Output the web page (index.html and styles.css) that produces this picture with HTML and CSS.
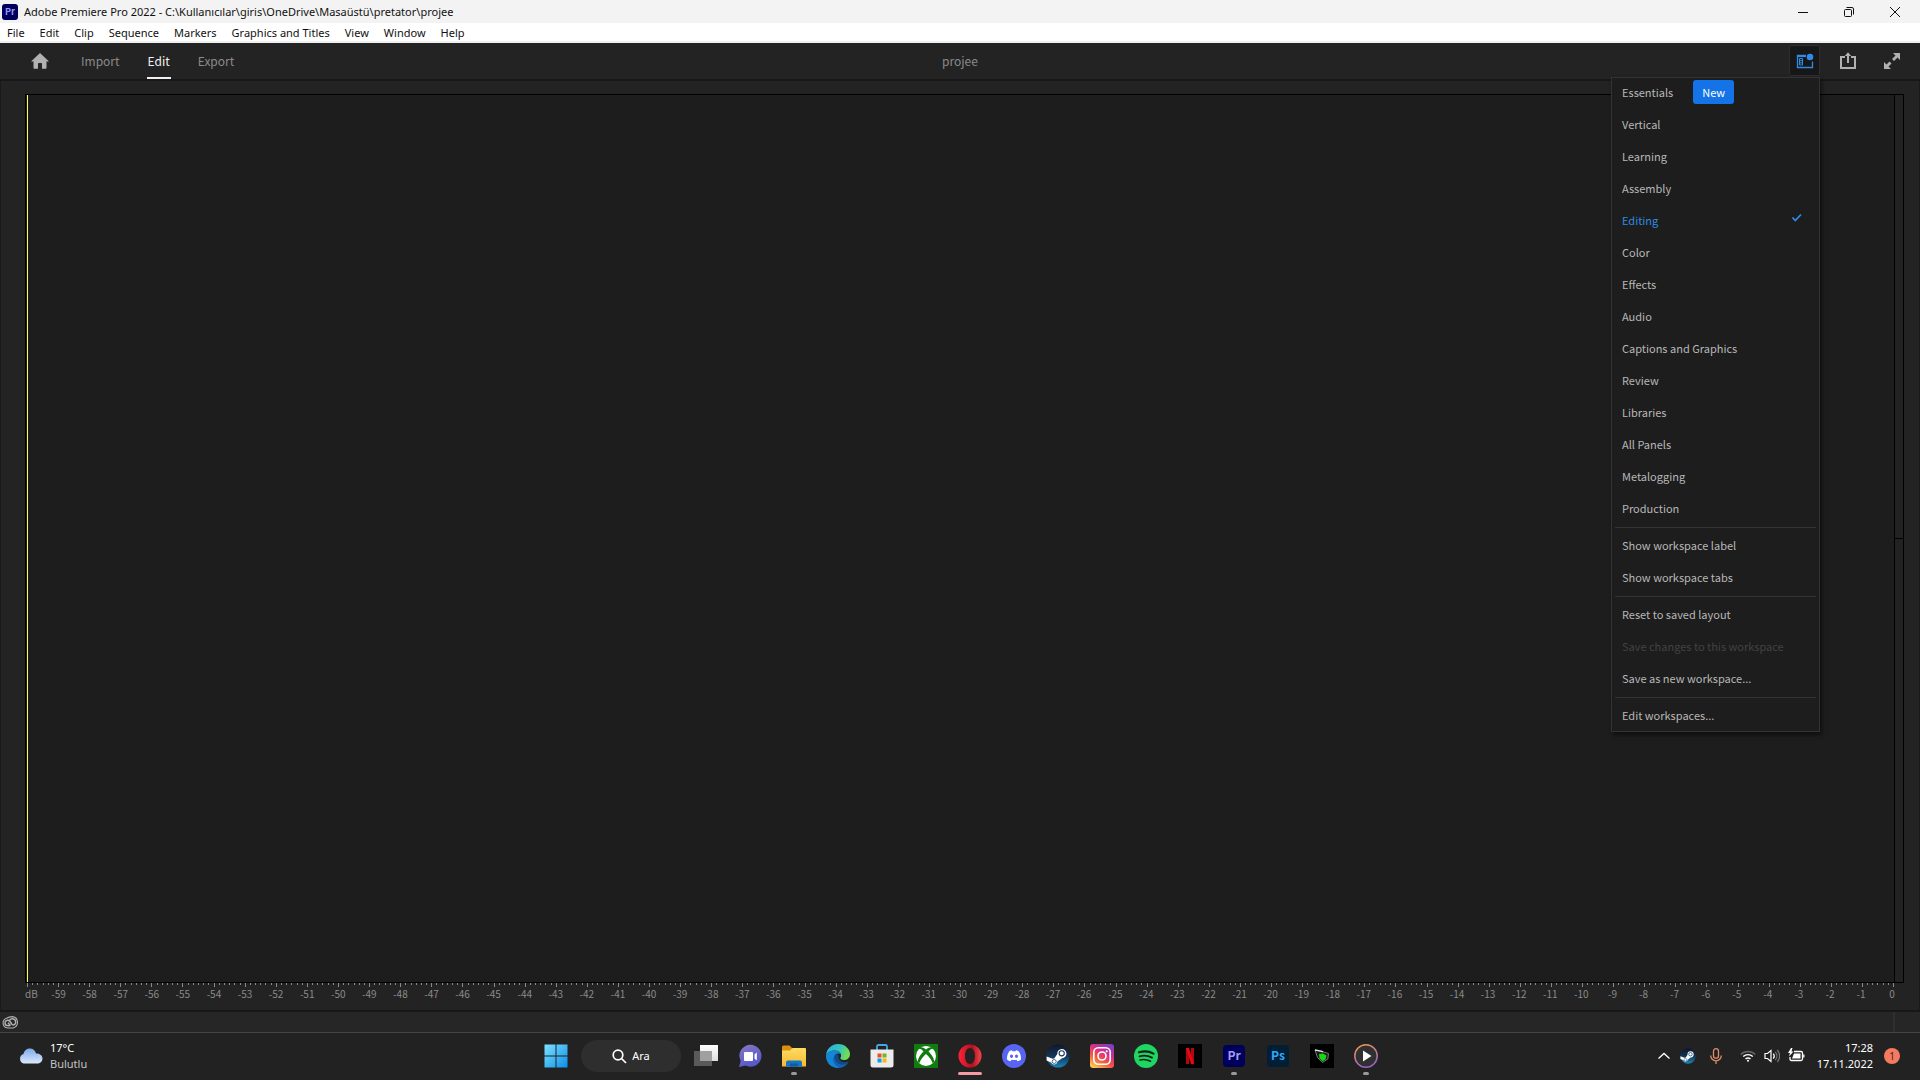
FILE: index.html
```html
<!DOCTYPE html>
<html lang="en">
<head>
<meta charset="utf-8">
<title>Adobe Premiere Pro 2022</title>
<link rel="stylesheet" href="styles.css">
</head>
<body>
<div class="titlebar">
  <svg class="app-icon" width="16" height="16" viewBox="0 0 16 16"><rect width="16" height="16" rx="3" fill="#00005b"/><text x="8" y="11" text-anchor="middle" class="logo-small">Pr</text></svg>
  <h1 class="window-title">Adobe Premiere Pro 2022 - C:\Kullanıcılar\giris\OneDrive\Masaüstü\pretator\projee</h1>
  <div class="window-buttons">
    <button class="window-button" aria-label="Minimize"><svg width="12" height="12" viewBox="0 0 12 12"><path d="M1 6.500h10" stroke="#111" fill="none"/></svg></button>
    <button class="window-button" aria-label="Restore"><svg width="12" height="12" viewBox="0 0 12 12" fill="none" stroke="#111"><rect x="1.500" y="3.500" width="7" height="7" rx="1"/><path d="M3.500 1.500h5.500q1.500 0 1.500 1.500v5.500"/></svg></button>
    <button class="window-button" aria-label="Close"><svg width="12" height="12" viewBox="0 0 12 12"><path d="M1 1l10 10M11 1L1 11" stroke="#111" fill="none"/></svg></button>
  </div>
</div>
<nav class="menubar">
  <button class="menu-name">File</button><button class="menu-name">Edit</button><button class="menu-name">Clip</button><button class="menu-name">Sequence</button><button class="menu-name">Markers</button><button class="menu-name">Graphics and Titles</button><button class="menu-name">View</button><button class="menu-name">Window</button><button class="menu-name">Help</button>
</nav>
<header class="header">
  <div class="modes">
    <button class="icon-button" aria-label="Home"><svg width="18" height="16" viewBox="0 0 18 16"><path d="M9 0L0 8.500h2.500V15a.8.8 0 0 0 .8.8H7v-5q0-.8.8-.8h2.400q.8 0 .8.800v5h3.700a.8.8 0 0 0 .8-.8V8.500H18z" fill="#b1b1b1"/></svg></button>
    <button class="mode">Import</button>
    <button class="mode mode-active">Edit</button>
    <button class="mode">Export</button>
  </div>
  <div class="project-name">projee</div>
  <div class="actions">
    <div class="workspace">
      <button class="workspace-button" aria-label="Workspaces" aria-expanded="true"><svg width="18" height="16" viewBox="0 0 18 16" fill="none" stroke="#2f8be6"><path d="M10 2.500H1.500v12h15V8.500" stroke-width="1.300"/><path d="M1 3.300h9" stroke-width="1.500"/><path d="M3.500 5.500h3v6.500h-3zM3.500 7.700h3M3.500 9.900h3"/><circle cx="14" cy="4" r="3.300" fill="#2f8be6" stroke="none"/></svg></button>
      <div class="dropdown">
        <button class="item">Essentials <span class="badge">New</span></button>
        <button class="item">Vertical</button>
        <button class="item">Learning</button>
        <button class="item">Assembly</button>
        <button class="item item-selected">Editing <svg class="check" width="12" height="10" viewBox="0 0 12 10"><path d="M1.500 4.500L4.300 7.500 10 1.500" fill="none" stroke="#2f8be6" stroke-width="1.800"/></svg></button>
        <button class="item">Color</button>
        <button class="item">Effects</button>
        <button class="item">Audio</button>
        <button class="item">Captions and Graphics</button>
        <button class="item">Review</button>
        <button class="item">Libraries</button>
        <button class="item">All Panels</button>
        <button class="item">Metalogging</button>
        <button class="item">Production</button>
        <hr class="separator">
        <button class="item">Show workspace label</button>
        <button class="item">Show workspace tabs</button>
        <hr class="separator">
        <button class="item">Reset to saved layout</button>
        <button class="item" disabled>Save changes to this workspace</button>
        <button class="item">Save as new workspace...</button>
        <hr class="separator">
        <button class="item">Edit workspaces...</button>
      </div>
    </div>
    <button class="icon-button" aria-label="Quick export"><svg width="18" height="18" viewBox="0 0 18 18" fill="none" stroke="#b1b1b1" stroke-width="2"><path d="M6 5H2v11h14V5h-4"/><path d="M9 11V3"/><path d="M5.800 4L9 .3 12.200 4z" fill="#b1b1b1" stroke="none"/></svg></button>
    <button class="icon-button" aria-label="Full screen"><svg width="18" height="18" viewBox="0 0 18 18" fill="#b1b1b1"><path d="M10 1h7v7l-2.500-2.500-3.500 3.500-2-2 3.500-3.500zM8 17H1v-7l2.500 2.500L6.500 9.500l2 2-3 3z"/></svg></button>
  </div>
</header>
<main class="panel">
  <div class="meter">
    <div class="meter-bars"></div>
    <div class="meter-clips"><span class="clip"></span><span class="clip"></span></div>
  </div>
  <svg class="ticks" id="ticks"></svg>
  <ol class="scale" id="scale"><li class="unit">dB</li></ol>
</main>
<footer class="status">
  <svg width="17" height="13" viewBox="0 0 17 13" fill="none" stroke="#b1b1b1"><path d="M5.500 12A5 5 0 0 1 4.500 2.300Q7 .6 10.500.600a5.800 5.800 0 0 1 .5 11.400z" stroke-width="1.100"/><path d="M8.500 8.700C7 10.300 3 10 3 7s3.500-3.300 5-1.500l2 2.700c1.500 1.700 3.700.2 3.700-2C13.700 2.700 9.500 1.800 7.500 4.300M6 6.800l2.500 3" stroke-width="1.500"/></svg>
  <span class="status-end"></span>
</footer>
<div class="taskbar">
  <button class="weather">
    <svg width="25" height="16" viewBox="0 0 25 16"><defs><linearGradient id="sky" x2="0" y2="1"><stop stop-color="#7da9ea"/><stop offset="1" stop-color="#dce9fb"/></linearGradient></defs><path d="M5.500 15.500A5 5 0 0 1 5.500 6C6 2.500 9 .5 12 .5S17.500 2.500 18 5.500c4 0 6.500 2 6.500 5s-2.500 5-5.500 5z" fill="url(#sky)"/></svg>
    <span class="weather-text"><span>17°C</span><span class="weather-note">Bulutlu</span></span>
  </button>
  <div class="apps">
    <button class="app" aria-label="Start"><svg width="24" height="24" viewBox="0 0 24 24"><defs><linearGradient id="win" x2="1" y2="1"><stop stop-color="#7de3ff"/><stop offset="1" stop-color="#0c8de8"/></linearGradient></defs><path d="M.5.500h11v11H.5zM12.500.500h11v11h-11zM.5 12.500h11v11H.5zM12.500 12.500h11v11h-11z" fill="url(#win)"/></svg></button>
    <button class="search"><svg width="15" height="15" viewBox="0 0 15 15" fill="none" stroke="#fff" stroke-width="1.700"><circle cx="6" cy="6" r="4.800"/><path d="M9.500 9.500L14 14"/></svg>Ara</button>
    <button class="app" aria-label="Task view"><svg width="24" height="24" viewBox="0 0 24 24"><defs><linearGradient id="tv" x2="0" y2="1"><stop stop-color="#fff"/><stop offset="1" stop-color="#ddd"/></linearGradient></defs><path d="M6 1h18v16H6z" fill="url(#tv)"/><path d="M0 7h18v15H0z" fill="#5a5a5a"/><path d="M6 7h12v10H6z" fill="#a0a0a0"/></svg></button>
    <button class="app" aria-label="Chat"><svg width="24" height="24" viewBox="0 0 24 24"><defs><linearGradient id="chat" x2=".5" y2="1"><stop stop-color="#8a78c4"/><stop offset="1" stop-color="#5558c9"/></linearGradient></defs><path d="M12.500.800a11 11 0 1 1-5 20.800L1 23l1.700-6A11 11 0 0 1 12.500.800z" fill="url(#chat)"/><rect x="6" y="8" width="9" height="9" rx="1" fill="#fff"/><path d="M16.500 10.500l2.300-2v8l-2.300-2z" fill="#fff"/></svg></button>
    <button class="app app-running" aria-label="File Explorer"><svg width="24" height="24" viewBox="0 0 24 24"><defs><linearGradient id="fold" x2="0" y2="1"><stop stop-color="#ffdc65"/><stop offset="1" stop-color="#f6b92d"/></linearGradient></defs><path d="M0 3q0-1.500 1.500-1.500h6L10 4v4H0z" fill="#d9920b"/><path d="M0 6.500h8L10.500 4H23q1 0 1 1v17.500H0z" fill="url(#fold)"/><path d="M4 22.500v-4q0-2 2-2h12q2 0 2 2v4z" fill="#1176c8"/><path d="M8 19.500h8v3H8z" fill="#0b5da7"/></svg></button>
    <button class="app" aria-label="Edge"><svg width="24" height="24" viewBox="0 0 24 24"><defs><linearGradient id="edge" x2="1" y2=".3"><stop stop-color="#2fa9e5"/><stop offset=".6" stop-color="#36c5ba"/><stop offset="1" stop-color="#70dd55"/></linearGradient></defs><path d="M0 11C1 4 6 0 12 0c7 0 12 5 12 10 0 4-3 6-6 6s-4-1-3.500-2.200C16.500 10 13.500 6.500 9 6.500c-4 0-7.500 2-9 4.500z" fill="url(#edge)"/><path d="M0 11c2-3 5-4.500 9-4.500 3 0 5.500 1.500 6 4C12 8.500 8.500 10 8.500 14c0 5 4 8 8 8.500C9 27-1 20 0 11z" fill="#1387d6"/><path d="M8.300 12c-1 5.500 3 9.500 8 9.300 2.500-.2 4.700-1.500 6.200-3.300.3-.5 0-.8-.5-.6-4 1.800-9 .2-9.300-3.900.5-3-3-4.500-4.400-1.500z" fill="#114a8b"/><path d="M8.300 12C5.500 16 8 22.500 14.500 23.700c3.500-.5 6.500-2.700 8-5.700-5.500 5.500-14.500 2-14.200-6z" fill="#1463b2"/></svg></button>
    <button class="app" aria-label="Microsoft Store"><svg width="24" height="24" viewBox="0 0 24 24"><path d="M7 6V2.500Q7 1 8.500 1h7Q17 1 17 2.500V6" fill="none" stroke="#41a8e6" stroke-width="1.800"/><path d="M.5 5.500h23V21q0 2.500-2.500 2.500H3Q.5 23.500.5 21z" fill="#ececec"/><path d="M7.500 9.500h4v4h-4z" fill="#e8502a"/><path d="M12.500 9.500h4v4h-4z" fill="#79b51c"/><path d="M7.500 14.500h4v4h-4z" fill="#1b98e0"/><path d="M12.500 14.500h4v4h-4z" fill="#fbb614"/></svg></button>
    <button class="app" aria-label="Xbox"><svg width="24" height="24" viewBox="0 0 24 24"><rect width="24" height="24" rx="1" fill="#107c10"/><circle cx="12" cy="12" r="10" fill="#fff"/><path d="M6 3.500c2-.5 4 .5 6 2 2-1.500 4-2.500 6-2l2 1.500c-2-1-4 .5-5.500 2.500C18 11 20.500 15 20 18l-1.500 1C17.500 15.500 15 12.500 12 10c-3 2.500-5.500 5.500-6.500 9L4 18c-.5-3 2-7 5.500-10.500C8 5.500 6 4 4 5z" fill="#107c10"/></svg></button>
    <button class="app app-current" aria-label="Opera"><svg width="24" height="24" viewBox="0 0 24 24"><defs><linearGradient id="op" x2="1"><stop stop-color="#ff2338"/><stop offset=".6" stop-color="#b40e1d"/><stop offset="1" stop-color="#f0484f"/></linearGradient></defs><path fill-rule="evenodd" d="M12 .5a11.500 11.500 0 1 0 0 23 11.500 11.500 0 1 0 0-23zM12 4c3 0 5 3.500 5 8s-2 8-5 8-5-3.500-5-8 2-8 5-8z" fill="url(#op)"/></svg></button>
    <button class="app" aria-label="Discord"><svg width="24" height="24" viewBox="0 0 24 24"><circle cx="12" cy="12" r="12" fill="#5865f2"/><path fill-rule="evenodd" d="M7.500 7l2.500-.8.600 1h2.800l.6-1 2.500.8c1.800 2.500 2.700 5.300 2.500 8.500q-1.800 1.500-3.600 1.700l-.9-1.400q-2.500.6-5 0l-.9 1.400Q6.800 17 5 15.500C4.800 12.300 5.700 9.500 7.500 7zM9.500 10.500a1.500 1.700 0 1 0 .01 0zM14.500 10.500a1.500 1.700 0 1 0 .01 0z" fill="#fff"/></svg></button>
    <button class="app" aria-label="Steam"><svg width="24" height="24" viewBox="0 0 24 24"><defs><linearGradient id="steam" x2="0" y2="1"><stop stop-color="#10172e"/><stop offset=".5" stop-color="#123456"/><stop offset="1" stop-color="#1b86b8"/></linearGradient></defs><circle cx="12" cy="12" r="11.500" fill="url(#steam)"/><g id="steam-mark"><path d="M.6 12.500l6 2.300 1.700-.3 3-4.500a4.600 4.600 0 1 1 4.700 4.200l-4.500 3.300a3.300 3.300 0 0 1-6.300 1L.6 16.500z" fill="#fff"/><circle cx="15.700" cy="9.300" r="2.600" fill="none" stroke="#17375a" stroke-width="1.100"/><circle cx="8.200" cy="17.500" r="2" fill="none" stroke="#17375a" stroke-width=".7"/></g></svg></button>
    <button class="app" aria-label="Instagram"><svg width="24" height="24" viewBox="0 0 24 24"><defs><linearGradient id="ig" x1=".2" y1="1" x2=".8" y2="0"><stop stop-color="#fdca57"/><stop offset=".35" stop-color="#f4593e"/><stop offset=".65" stop-color="#d62e8a"/><stop offset="1" stop-color="#7b3fc5"/></linearGradient></defs><rect width="24" height="24" rx="3" fill="url(#ig)"/><g fill="none" stroke="#fff" stroke-width="1.600"><rect x="3.800" y="3.800" width="16.400" height="16.400" rx="4.500"/><circle cx="12" cy="12" r="4"/></g><circle cx="16.700" cy="7.300" r="1.100" fill="#fff"/></svg></button>
    <button class="app" aria-label="Spotify"><svg width="24" height="24" viewBox="0 0 24 24"><circle cx="12" cy="12" r="12" fill="#1fd662"/><g fill="none" stroke="#16231a" stroke-linecap="round"><path d="M5 8.300c5-1.500 10.500-1 14.500 1.300" stroke-width="2.200"/><path d="M5.500 12.300c4.500-1.300 8.500-.8 12.500 1.300" stroke-width="1.900"/><path d="M6 16c3.800-1 7-.5 10.500 1.200" stroke-width="1.600"/></g></svg></button>
    <button class="app" aria-label="Netflix"><svg width="24" height="24" viewBox="0 0 24 24"><path d="M0 0h24v24H0z" fill="#000"/><path d="M8 4h3v16l-3 .3zM13 4h3v16.300L13 20z" fill="#b20710"/><path d="M8 4h3l5 16.300L13 20z" fill="#e50914"/></svg></button>
    <button class="app app-running" aria-label="Premiere Pro"><svg width="24" height="24" viewBox="0 0 24 24"><rect x="1" y="1" width="22" height="22" rx="4" fill="#00005b"/><text x="12" y="16" text-anchor="middle" class="logo">Pr</text></svg></button>
    <button class="app" aria-label="Photoshop"><svg width="24" height="24" viewBox="0 0 24 24"><rect x="1" y="1" width="22" height="22" rx="4" fill="#001e36"/><text x="12" y="16" text-anchor="middle" class="logo logo-ps">Ps</text></svg></button>
    <button class="app" aria-label="Monitor"><svg width="24" height="24" viewBox="0 0 24 24"><path d="M0 0h24v24H0z" fill="#000"/><path d="M5 6l6 1.200 7.500 2.300-.7 5.500-5.300 3.500-5-5z" fill="#1c1c1c" stroke="#777"/><path d="M5 6l6 1.200 2 .6" fill="none" stroke="#ddd" stroke-width="1.300"/><path d="M9 10l4-.5 3.500 2-1 4-3 1.800-3-3z" fill="#16d914"/></svg></button>
    <button class="app app-running" aria-label="Media Player"><svg width="24" height="24" viewBox="0 0 24 24"><defs><linearGradient id="mp" x2=".4" y2="1"><stop stop-color="#f39a4a"/><stop offset="1" stop-color="#9a63c4"/></linearGradient></defs><circle cx="12" cy="12" r="11.200" fill="#303030" stroke="url(#mp)" stroke-width="1.500"/><path d="M9 6.500l8.500 5.500L9 17.500z" fill="#fff"/></svg></button>
  </div>
  <div class="tray">
    <button class="tray-icon" aria-label="Show hidden icons"><svg width="14" height="16" viewBox="0 0 14 16"><path d="M1.500 10.500L7 5.500l5.500 5" fill="none" stroke="#fff" stroke-width="1.300"/></svg></button>
    <button class="tray-icon tray-steam" aria-label="Steam"><svg width="16" height="16" viewBox="0 0 24 24"><circle cx="12" cy="12" r="11.500" fill="url(#steam)"/><use href="#steam-mark"/></svg></button>
    <button class="tray-icon tray-mic" aria-label="Microphone"><svg width="12" height="16" viewBox="0 0 12 16" fill="none" stroke="#dd8d6a" stroke-width="1.300"><rect x="3.500" y=".7" width="5" height="9.500" rx="2.500"/><path d="M.7 7.500a5.300 5.300 0 0 0 10.600 0M6 12.800V16"/></svg></button>
    <button class="quick" aria-label="Network, sound and battery">
      <svg width="16" height="16" viewBox="0 0 16 16" fill="none" stroke="#fff" stroke-width="1.400"><path d="M.8 6.500a10 10 0 0 1 14.400 0" stroke="#666"/><path d="M3.200 8.500a7 7 0 0 1 9.600 0M5.500 11a4 4 0 0 1 5 0"/><circle cx="8" cy="12.800" r="1" fill="#fff" stroke="none"/></svg>
      <svg width="16" height="16" viewBox="0 0 16 16" fill="none" stroke="#fff" stroke-width="1.200"><path d="M1 5.500h2.500L7 2.500v11l-3.500-3H1z"/><path d="M9.300 5.500a4 4 0 0 1 0 5"/><path d="M11.300 3.800a6.500 6.500 0 0 1 0 8.400M13.300 2a9 9 0 0 1 0 12" stroke="#777"/></svg>
      <svg width="17" height="16" viewBox="0 0 17 16" fill="none" stroke="#fff" stroke-width="1.300"><path d="M6 3.500h7q1.500 0 1.500 1.500v6q0 1.500-1.500 1.500H3.500Q2 12.500 2 11V9"/><path d="M6 5.500h6.500v5H4z" fill="#fff" stroke="none"/><path d="M15.800 6.500v3"/><path d="M3 0L0 5h2L1 8.500 5.500 3.500H3.500L4.500 0z" fill="#fff" stroke="none"/></svg>
    </button>
    <button class="clock"><span>17:28</span><span>17.11.2022</span></button>
    <button class="notice" aria-label="Notifications">1</button>
  </div>
</div>
<script src="scale.js"></script>
</body>
</html>
```
FILE: styles.css
```css
* { box-sizing: border-box; }
body {
  margin: 0;
  min-height: 100vh;
  display: flex;
  flex-direction: column;
  background: #232323;
  color: #b4b4b4;
  font: 11px/16px "Noto Sans", "Open Sans", sans-serif;
}
button {
  margin: 0;
  padding: 0;
  border: 0;
  background: none;
  color: inherit;
  font: inherit;
}
svg { display: block; flex: none; }

.titlebar {
  display: flex;
  align-items: center;
  height: 23px;
  padding-left: 2px;
  background: #f3f3f3;
  color: #111;
}
.window-title {
  flex: 1;
  margin: 0 0 0 6px;
  font-size: 11px;
  line-height: 16px;
  font-weight: 400;
}
.window-buttons { display: flex; padding-right: 2px; }
.window-button {
  display: flex;
  width: 46px;
  height: 20px;
  align-items: center;
  justify-content: center;
}
.menubar {
  display: flex;
  align-items: center;
  gap: 15px;
  height: 20px;
  padding: 2px 7px 0;
  border-bottom: 2px solid #f0f0f0;
  background: #fff;
  color: #111;
}

.header {
  display: grid;
  grid-template-columns: 1fr auto 1fr;
  height: 38px;
  border-bottom: 2px solid #171717;
  color: #8a8a8a;
  font: 12px/20px "Noto Sans CJK SC", sans-serif;
}
.modes { display: flex; padding-left: 31px; }
.mode {
  margin-left: 26px;
  padding: 2px 1px 0;
  border-bottom: 2px solid transparent;
}
.modes .mode:nth-child(2) { margin-left: 31px; }
.mode-active { color: #f0f0f0; border-color: #f0f0f0; }
.icon-button { display: flex; align-items: center; }
.project-name { align-self: center; }
.actions {
  display: flex;
  justify-content: flex-end;
  gap: 26px;
  padding-right: 19px;
}
.actions .workspace { margin-right: -7px; }
.workspace { position: relative; padding-top: 2px; }
.workspace-button {
  display: flex;
  width: 31px;
  height: 31px;
  align-items: center;
  justify-content: center;
  border: 1px solid #2e2e2e;
  border-radius: 2px;
  background: #171717;
}
.dropdown {
  position: absolute;
  z-index: 1;
  top: 34px;
  right: 0;
  width: 209px;
  background: #1d1d1d;
  box-shadow: inset 0 0 0 1px #333, 2px 3px 4px rgba(0, 0, 0, .5);
  color: #b8b8b8;
  font-size: 11px;
}
.item {
  display: flex;
  align-items: center;
  width: 100%;
  height: 32px;
  padding: 0 17px 2px 11px;
}
.item:disabled { color: #424242; }
.item-selected { color: #2f8be6; }
.check { margin: 0 0 4px auto; }
.badge {
  margin-left: 20px;
  padding: 2px 9px;
  border-radius: 3px;
  background: #1473e6;
  color: #fff;
}
.separator {
  margin: 2px 4px;
  border: 0;
  border-top: 1px solid #333;
}

.panel {
  flex: 1;
  display: flex;
  flex-direction: column;
  padding: 13px 11px 0 24px;
  border-left: 1px solid #1a1a1a;
  border-right: 1px solid #1a1a1a;
  border-bottom: 2px solid #171717;
}
.meter {
  flex: 1;
  display: flex;
  margin-right: 4px;
  border: 1px solid #000;
  background: #1d1d1d;
}
.meter-bars {
  flex: 1;
  margin-left: 1px;
  border-left: 1px solid #ffff4a;
}
.meter-clips {
  display: flex;
  flex-direction: column;
  width: 9px;
  border-left: 1px solid #000;
}
.clip { flex: 1; background: #222; }
.clip + .clip { border-top: 1px solid #000; }
.ticks {
  width: calc(100% - 17px);
  height: 4px;
  margin-left: 2px;
  overflow: visible;
}
.scale {
  display: flex;
  height: 23px;
  margin: 0;
  padding: 0;
  list-style: none;
  color: #8a8a8a;
  font: 10px/14px "Noto Sans CJK SC", sans-serif;
}
.scale li { flex: 1; text-align: center; }
.scale .unit { flex: none; width: 18px; text-align: left; }

.status {
  display: flex;
  align-items: center;
  justify-content: space-between;
  height: 21px;
  padding: 0 25px 0 2px;
  border-bottom: 1px solid #444;
  background: #262626;
}
.status-end { width: 2px; height: 20px; background: #303030; }

.taskbar {
  display: grid;
  grid-template-columns: 1fr auto 1fr;
  height: 47px;
  padding-bottom: 1px;
  background: #222;
  color: #fff;
}
.weather {
  display: flex;
  align-items: center;
  gap: 7px;
  padding-left: 18px;
  text-align: left;
}
.weather-text, .clock { display: grid; }
.weather-note { color: #c4c4c4; }
.apps { display: flex; align-items: center; padding-left: 2px; }
.app {
  position: relative;
  display: flex;
  width: 44px;
  height: 40px;
  align-items: center;
  justify-content: center;
}
.app-running::after, .app-current::after {
  content: "";
  position: absolute;
  bottom: 1px;
  width: 6px;
  height: 3px;
  border-radius: 2px;
  background: #999;
}
.app-current::after { width: 24px; background: #f29aa5; }
.search {
  display: flex;
  width: 100px;
  height: 32px;
  margin: 0 3px;
  align-items: center;
  justify-content: center;
  gap: 5px;
  border-radius: 16px;
  background: #2e2e2e;
}
.logo {
  fill: #a39cff;
  font: 700 12px "Noto Sans CJK SC", sans-serif;
}
.logo-ps { fill: #31a8ff; }
.logo-small {
  fill: #9999ff;
  font: 700 9px "Noto Sans CJK SC", sans-serif;
}
.tray {
  display: flex;
  align-items: center;
  justify-content: flex-end;
  padding-right: 20px;
}
.tray-steam { margin-left: 9px; }
.tray-mic { margin-left: 14px; }
.quick { display: flex; gap: 8px; margin-left: 18px; }
.clock { margin-left: 12px; text-align: right; }
.notice {
  width: 16px;
  height: 16px;
  margin-left: 11px;
  border-radius: 8px;
  background: #f47a60;
  color: #40201a;
  font-size: 10px;
}
```
FILE: scale.js
```js
// Decibel ruler: one long tick and a label per dB, five short ticks between.
const ticks = document.getElementById("ticks");
const scale = document.getElementById("scale");
for (let i = 0; i <= 360; i++) {
  const tick = document.createElementNS("http://www.w3.org/2000/svg", "rect");
  tick.setAttribute("x", (i / 3.6) + "%");
  tick.setAttribute("width", 1);
  tick.setAttribute("height", i % 6 ? 2 : 4);
  tick.setAttribute("fill", "#8a8a8a");
  tick.setAttribute("shape-rendering", "crispEdges");
  ticks.append(tick);
}
for (let db = -59; db <= 0; db++) {
  const label = document.createElement("li");
  label.textContent = db;
  scale.append(label);
}
```
